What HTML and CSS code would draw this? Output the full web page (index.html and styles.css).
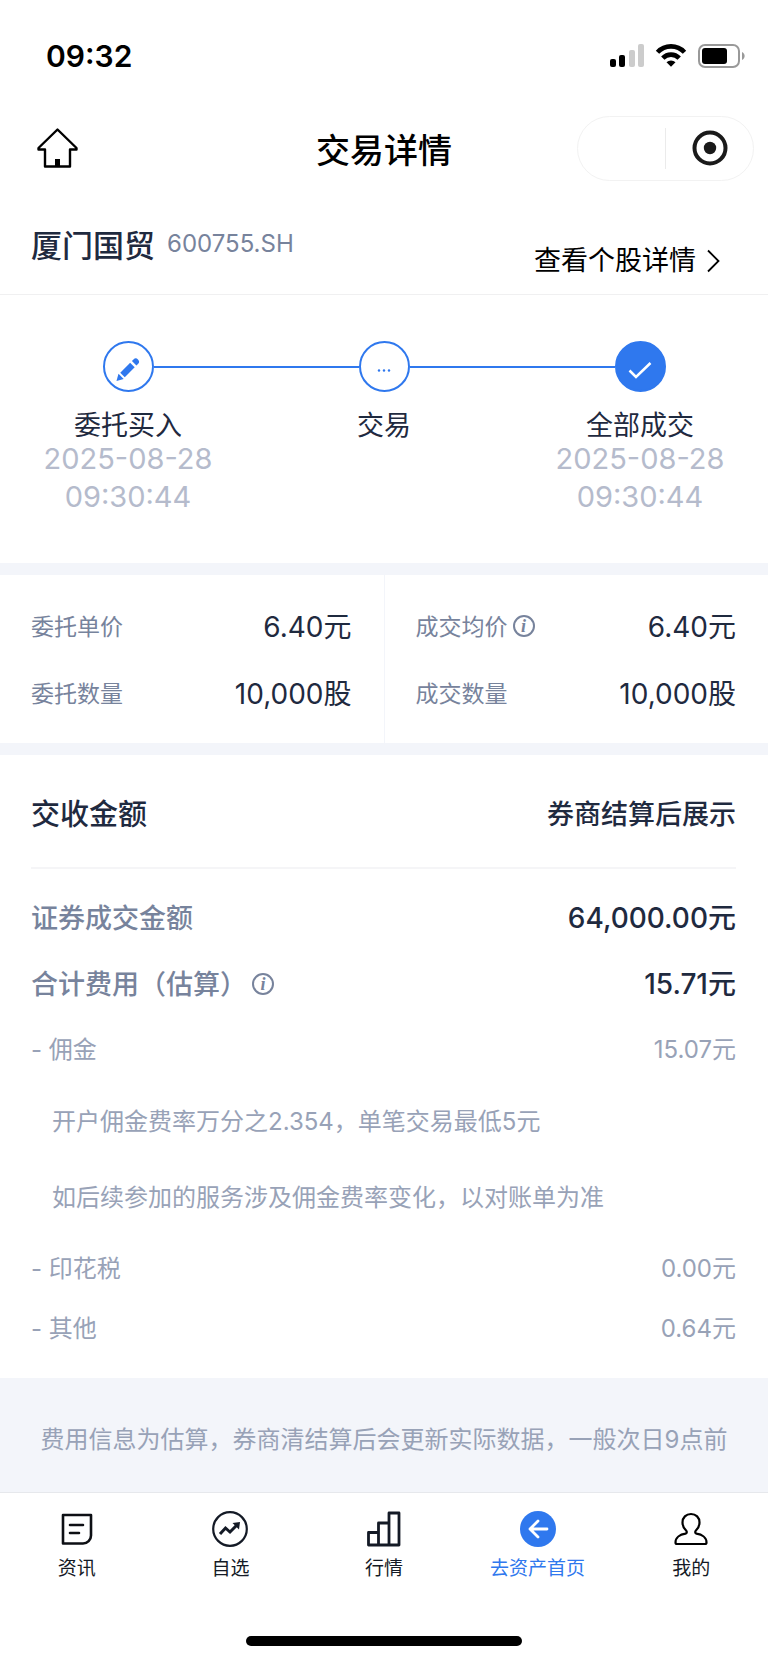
FILE: index.html
```
<!DOCTYPE html>
<html lang="zh-CN">
<head>
    <meta charset="UTF-8">
    <meta name="viewport" content="width=device-width, initial-scale=1.0">
    <title>交易详情</title>
    <link rel="stylesheet" href="styles.css">
</head>
<body>
    <div class="status-bar">
        <span class="clock">09:32</span>
        <svg class="status-icons" width="138" height="26" viewBox="0 0 138 26">
            <rect x="1" y="16" width="6" height="8" rx="2"/>
            <rect x="10" y="12" width="6" height="12" rx="2"/>
            <rect x="20" y="7" width="6" height="17" rx="2" fill="#ccc"/>
            <rect x="29" y="1" width="6" height="23" rx="2" fill="#ccc"/>
            <g fill="none" stroke="#000" stroke-width="4.6">
                <path d="M48.5 9.2a18.5 18.5 0 0 1 27 0"/>
                <path d="M53.8 15.2a11.3 11.3 0 0 1 16.4 0"/>
            </g>
            <path d="M57.5 19.2a6.5 6.500 0 0 1 9 0L62 23.800z"/>
            <rect x="90" y="2" width="40" height="22" rx="6" fill="none" stroke="#999" stroke-width="2"/>
            <rect x="93" y="5" width="25" height="16" rx="3"/>
            <path d="M133 9c3.500 1.500 3.500 6.500 0 8z" fill="#999"/>
        </svg>
    </div>

    <header class="nav-bar">
        <button class="home-btn" type="button" aria-label="首页">
            <svg width="42" height="42" viewBox="0 0 42 42" fill="none" stroke="#000" stroke-width="2.400" stroke-linejoin="round">
                <path d="M21.500 2.500L40.500 21v1.500h-6.500V39.500h-25V22.500H2.500V21z"/>
                <path d="M21.500 32V39" stroke-width="5"/>
            </svg>
        </button>
        <h1>交易详情</h1>
        <div class="capsule">
            <button type="button" aria-label="更多"></button>
            <button type="button" aria-label="关闭">
                <svg width="36" height="36" viewBox="0 0 36 36">
                    <circle cx="18" cy="18" r="15.500" fill="none" stroke="#1a1a1a" stroke-width="4"/>
                    <circle cx="18" cy="18" r="6.200" fill="#1a1a1a"/>
                </svg>
            </button>
        </div>
    </header>

    <main>
        <section class="stock">
            <h2>厦门国贸</h2>
            <span class="code">600755.SH</span>
            <a class="detail-link" href="#">
                查看个股详情
                <svg width="13" height="24" viewBox="0 0 13 24" fill="none" stroke="#000" stroke-width="1.800">
                    <path d="M1 1.500L11.500 12 1 22.500"/>
                </svg>
            </a>
        </section>

        <ol class="steps">
            <li>
                <div class="marker">
                    <span class="dot">
                        <svg width="28" height="28" viewBox="0 0 28 28" fill="#2f78ee">
                            <g transform="translate(2.500 28) rotate(-45)">
                                <path d="M0 0l6.500-3.700v7.400z"/>
                                <path d="M8.500-3.200h14v6.400h-14z"/>
                                <path d="M25-3.200h2.200a3.200 3.200 0 0 1 0 6.400H25z"/>
                            </g>
                        </svg>
                    </span>
                </div>
                <strong>委托买入</strong>
                <time>2025-08-28<br>09:30:44</time>
            </li>
            <li>
                <div class="marker">
                    <span class="dot">
                        <svg width="28" height="28" viewBox="0 0 28 28" fill="#2f78ee">
                            <circle cx="9" cy="17.500" r="1.200"/>
                            <circle cx="14" cy="17.500" r="1.200"/>
                            <circle cx="19" cy="17.500" r="1.200"/>
                        </svg>
                    </span>
                </div>
                <strong>交易</strong>
            </li>
            <li>
                <div class="marker">
                    <span class="dot done">
                        <svg width="28" height="28" viewBox="0 0 28 28" fill="none" stroke="#fff" stroke-width="2.500">
                            <path d="M3.500 17.500l6.500 6.500L24.500 10"/>
                        </svg>
                    </span>
                </div>
                <strong>全部成交</strong>
                <time>2025-08-28<br>09:30:44</time>
            </li>
        </ol>

        <section class="order">
            <dl>
                <div><dt>委托单价</dt><dd>6.40元</dd></div>
                <div><dt>委托数量</dt><dd>10,000股</dd></div>
            </dl>
            <dl>
                <div>
                    <dt>成交均价<button class="info" type="button" aria-label="成交均价说明">i</button></dt>
                    <dd>6.40元</dd>
                </div>
                <div><dt>成交数量</dt><dd>10,000股</dd></div>
            </dl>
        </section>

        <section class="settle">
            <div class="settle-head">
                <h3>交收金额</h3>
                <span>券商结算后展示</span>
            </div>
            <dl class="totals">
                <div><dt>证券成交金额</dt><dd>64,000.00元</dd></div>
                <div>
                    <dt>合计费用（估算）<button class="info" type="button" aria-label="合计费用说明">i</button></dt>
                    <dd>15.71元</dd>
                </div>
            </dl>
            <dl class="fees">
                <div><dt>- 佣金</dt><dd>15.07元</dd></div>
                <dd class="notes">
                    <p>开户佣金费率万分之2.354，单笔交易最低5元</p>
                    <p>如后续参加的服务涉及佣金费率变化，以对账单为准</p>
                </dd>
                <div><dt>- 印花税</dt><dd>0.00元</dd></div>
                <div><dt>- 其他</dt><dd>0.64元</dd></div>
            </dl>
        </section>

        <p class="disclaimer">费用信息为估算，券商清结算后会更新实际数据，一般次日9点前</p>
    </main>

    <nav class="tab-bar">
        <a href="#">
            <svg width="36" height="36" viewBox="0 0 36 36" fill="none" stroke="#0d0f14" stroke-width="2.600" stroke-linecap="round" stroke-linejoin="round">
                <path d="M4 4h28v20.500a8 8 0 0 1-8 8H4z"/>
                <path d="M11 14h13M11 22h9"/>
            </svg>
            资讯
        </a>
        <a href="#">
            <svg width="36" height="36" viewBox="0 0 36 36" fill="none" stroke="#141a26" stroke-width="2.200">
                <circle cx="18" cy="18" r="16.800"/>
                <path d="M8 23l5.500-6 4.500 4 7-7" stroke-width="3"/>
                <path d="M20.500 12l7.500-1-1 7.500z" fill="#141a26" stroke="none"/>
            </svg>
            自选
        </a>
        <a href="#">
            <svg width="36" height="36" viewBox="0 0 36 36" fill="none" stroke="#141a26" stroke-width="2.800" stroke-linejoin="round">
                <path d="M2.500 21.500h10V34h-10zM12.500 12h10.500v22h-10.500zM23 2h10v32H23z"/>
            </svg>
            行情
        </a>
        <a class="active" href="#">
            <svg width="36" height="36" viewBox="0 0 36 36" fill="none" stroke="#fff" stroke-width="2.800" stroke-linecap="round" stroke-linejoin="round">
                <circle cx="18" cy="18" r="18" fill="#2f78ee" stroke="none"/>
                <path d="M18 10l-8 8 8 8M10 18h17"/>
            </svg>
            去资产首页
        </a>
        <a href="#">
            <svg width="36" height="36" viewBox="0 0 36 36" fill="none" stroke="#000" stroke-width="2.200" stroke-linejoin="round">
                <path d="M18 3c5 0 8.500 3.500 8.500 8.500 0 3-1.200 5.500-3.200 7.500-1.500 1.500-1.500 3 .2 3.700C29 23.500 33.500 26.500 33.500 31.500c0 1-.5 1.500-1.500 1.500H4c-1 0-1.500-.5-1.500-1.500 0-5 4.500-8 10-8.800 1.700-.7 1.700-2.200.2-3.700-2-2-3.200-4.500-3.200-7.500C9.500 6.500 13 3 18 3z"/>
            </svg>
            我的
        </a>
    </nav>
    <div class="home-indicator"></div>
</body>
</html>
```

FILE: styles.css
```
* {
    box-sizing: border-box;
}
body {
    margin: 0;
    background: #fff;
    color: #1f2a3f;
    font-family: Inter, "Noto Sans CJK SC", sans-serif;
    font-size: 27px;
}
h1, h2, h3, p, dl, dd, ol {
    margin: 0;
    padding: 0;
}
a {
    color: inherit;
    text-decoration: none;
}
button {
    padding: 0;
    border: 0;
    background: none;
    font: inherit;
    color: inherit;
}
svg {
    display: block;
    flex: none;
}

/* Status bar */
.status-bar {
    display: flex;
    justify-content: space-between;
    align-items: center;
    height: 112px;
    padding: 0 21px 0 46px;
    color: #000;
}
.clock {
    font-size: 30px;
    font-weight: 600;
}

/* Navigation bar */
.nav-bar {
    display: grid;
    grid-template-columns: 1fr auto 1fr;
    align-items: center;
    height: 72px;
    padding: 0 14px 0 36px;
    color: #000;
}
.home-btn {
    justify-self: start;
}
.nav-bar h1 {
    margin-right: 22px;
    font-size: 34px;
    font-weight: 500;
}
.capsule {
    display: flex;
    justify-self: end;
    align-items: center;
    width: 177px;
    height: 65px;
    border: 1px solid #f2f2f2;
    border-radius: 33px;
}
.capsule button {
    display: flex;
    flex: 1;
    justify-content: center;
    align-items: center;
    height: 41px;
}
.capsule button + button {
    border-left: 1px solid #ebebeb;
}

/* Stock name */
.stock {
    display: flex;
    align-items: flex-start;
    gap: 12px;
    padding: 44px 48px 15px 31px;
    border-bottom: 1px solid #f0f0f1;
}
.stock h2 {
    font-size: 31px;
    font-weight: 500;
    line-height: 36px;
}
.code {
    color: #77839c;
    font-size: 24px;
    line-height: 32px;
}
.detail-link {
    display: flex;
    align-items: center;
    align-self: flex-end;
    gap: 11px;
    margin-top: 15px;
    margin-left: auto;
    color: #000;
    line-height: 36px;
}

/* Progress steps */
.steps {
    display: flex;
    padding: 46px 0 47px;
    list-style: none;
}
.steps li {
    flex: 1;
    text-align: center;
}
.marker {
    display: flex;
    align-items: center;
    margin-bottom: 20px;
}
.marker::before, .marker::after {
    content: "";
    flex: 1;
    height: 2px;
    background: #2f78ee;
}
.steps li:first-child .marker::before,
.steps li:last-child .marker::after {
    background: none;
}
.dot {
    display: flex;
    justify-content: center;
    align-items: center;
    width: 51px;
    height: 51px;
    border: 2px solid #2f78ee;
    border-radius: 50%;
}
.dot.done {
    background: #2f78ee;
}
.steps strong {
    display: block;
    font-weight: 400;
    line-height: 28px;
}
.steps time {
    display: block;
    color: #b5bbcc;
    font-size: 29px;
    line-height: 38px;
}

/* Label / value rows */
dl > div {
    display: flex;
    justify-content: space-between;
    align-items: center;
}
dt {
    display: flex;
    align-items: center;
}
.info {
    width: 22px;
    height: 22px;
    margin-top: 3px;
    margin-left: 5px;
    border: 2px solid #77839c;
    border-radius: 50%;
    font: italic bold 18px/16px "Liberation Serif", serif;
}

.order {
    display: flex;
    border-top: 12px solid #f3f5fa;
    border-bottom: 12px solid #f3f5fa;
}
.order dl {
    flex: 1;
    padding: 16px 32px 18px 31px;
}
.order dl + dl {
    border-left: 1px solid #f3f5fa;
}
.order dl > div {
    height: 67px;
}
.order dt {
    color: #77839c;
    font-size: 23px;
}
.order dd, .totals dd {
    font-size: 28px;
}

/* Settlement */
.settle {
    padding: 0 32px 22px 31px;
}
.settle-head {
    display: flex;
    justify-content: space-between;
    padding: 26px 0 18px;
    border-bottom: 2px solid #f5f5f7;
    font-weight: 500;
    line-height: 68px;
}
.settle-head h3 {
    font-size: 29px;
    font-weight: 500;
}
.totals {
    padding-top: 14px;
    font-weight: 500;
}
.totals > div {
    height: 66px;
}
.totals dt {
    color: #77839c;
}
.fees {
    padding-top: 2px;
    color: #98a2b7;
    font-size: 24px;
}
.fees > div {
    height: 60px;
}
.notes {
    padding: 7px 0 0 21px;
    line-height: 76px;
}
.disclaimer {
    padding: 32px 24px 22px;
    background: #f3f5fa;
    color: #98a2b7;
    font-size: 24px;
    line-height: 60px;
    text-align: center;
}

/* Bottom tabs */
.tab-bar {
    display: flex;
    padding: 18px 0 53px;
    border-top: 1px solid #e6e8ec;
}
.tab-bar a {
    display: flex;
    flex: 1;
    flex-direction: column;
    align-items: center;
    gap: 8px;
    color: #141a26;
    font-size: 19px;
    line-height: 28px;
}
.tab-bar .active {
    color: #2f78ee;
}
.home-indicator {
    width: 36%;
    height: 10px;
    margin: 0 auto 17px;
    border-radius: 5px;
    background: #000;
}
```
